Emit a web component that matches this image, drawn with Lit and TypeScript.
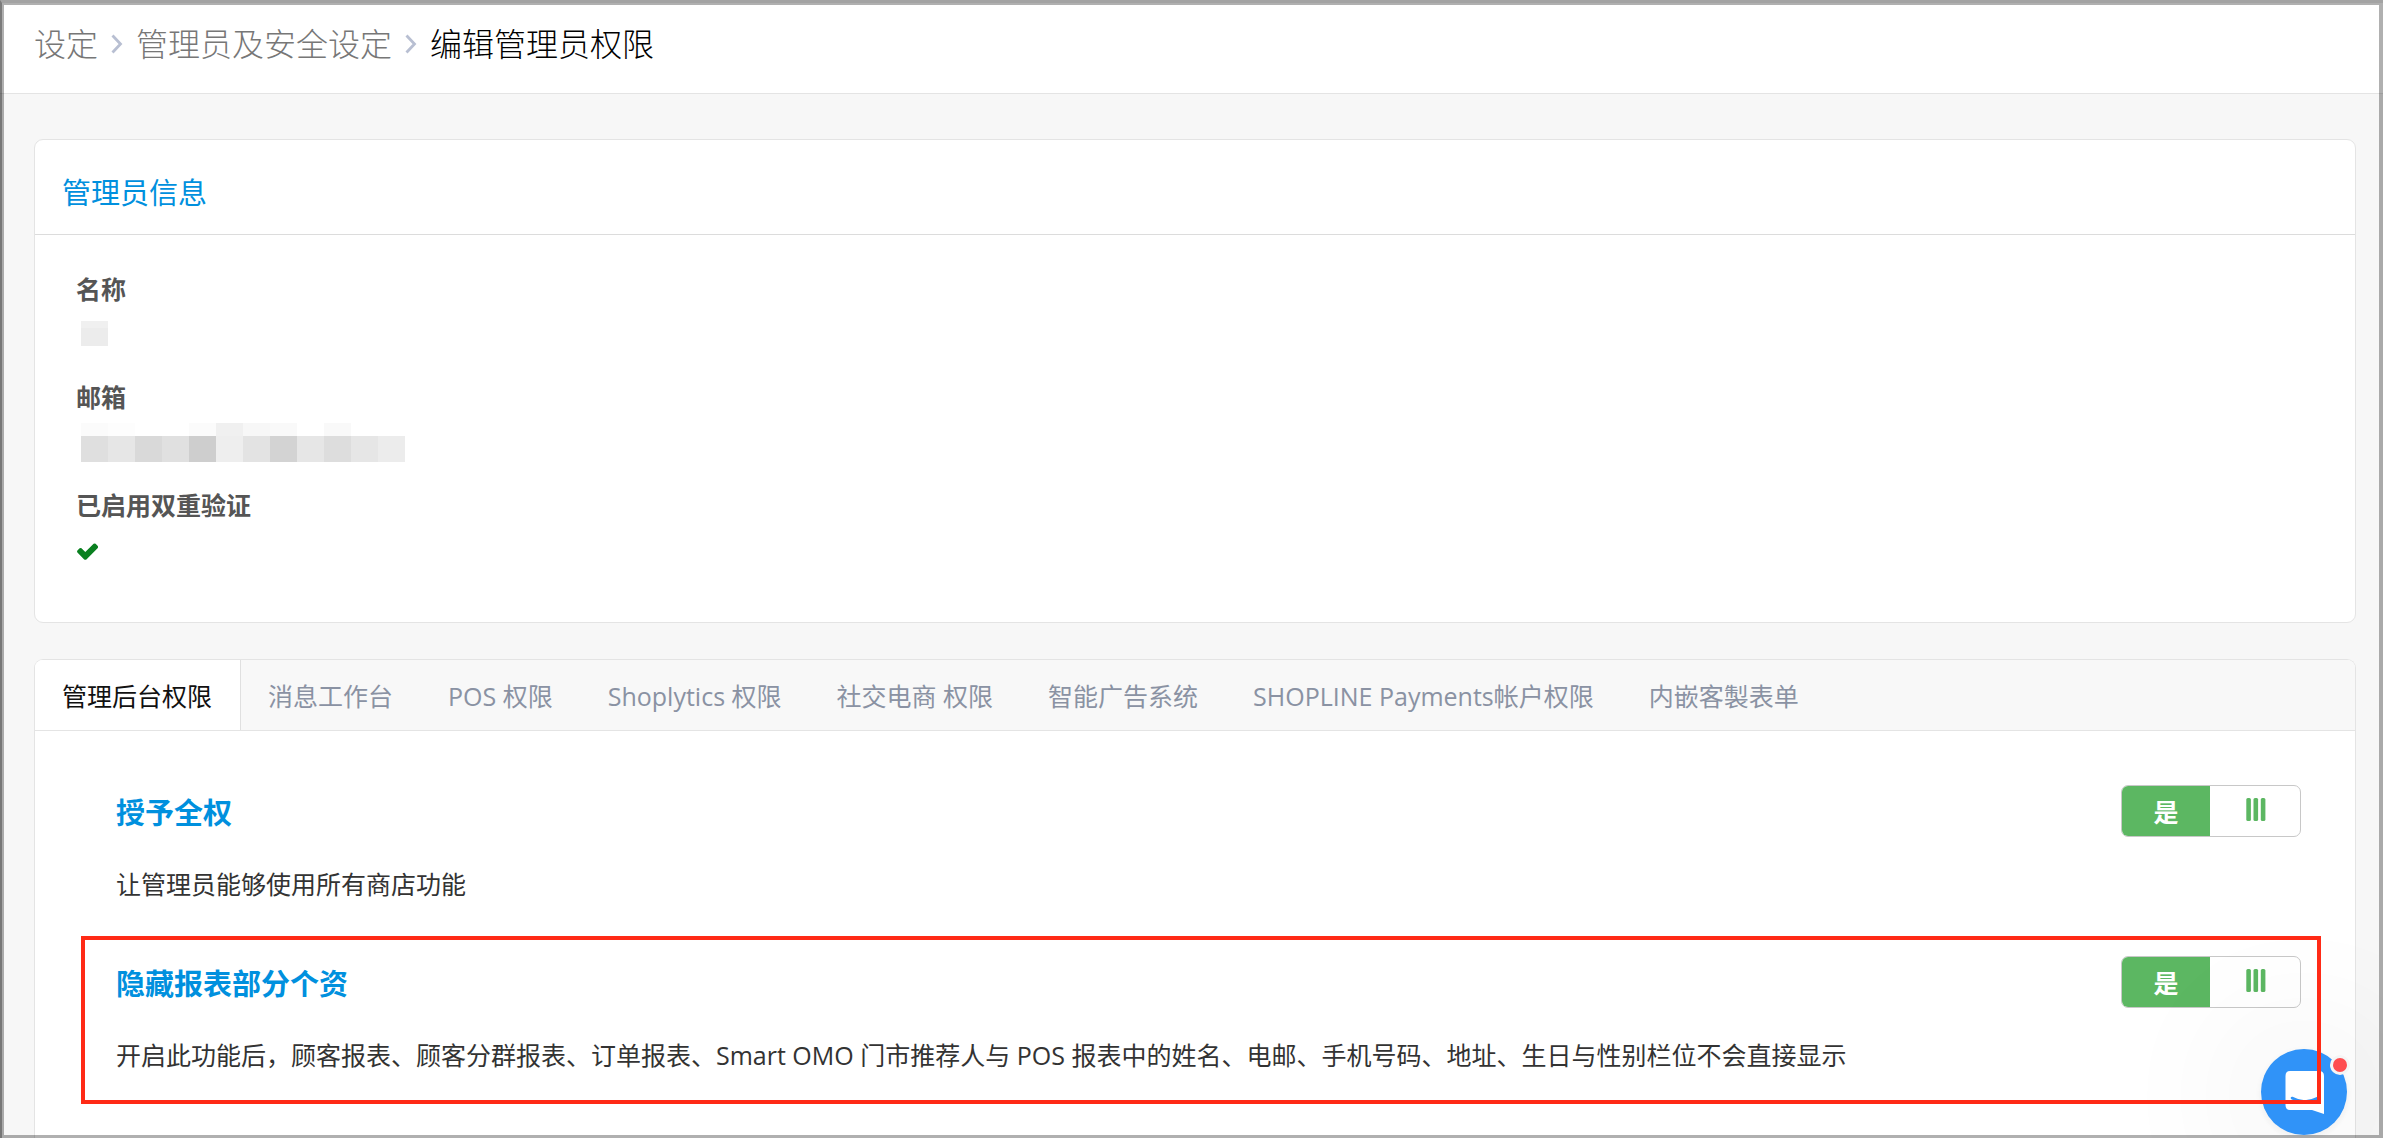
import { LitElement, html, css, svg, nothing } from "lit";
import { customElement, property, state } from "lit/decorators.js";
import { classMap } from "lit/directives/class-map.js";

interface Permission {
  title: string;
  text: string;
  on: boolean;
  marked: boolean;
}

type Block = [x: number, y: number, w: number, h: number, fill: string];

const NAME_BLOCKS: Block[] = [
  [0, 13, 27, 7, "#f0f0f0"],
  [0, 20, 27, 18, "#ececec"],
];

const MAIL_TOP = ["#fbfbfb", "#fdfdfd", "", "", "#fbfbfb", "#f0f0f0", "#f7f7f7", "#f9f9f9", "", "#f9f9f9", "", ""];
const MAIL_MAIN = [
  "#dfdfdf", "#e6e6e6", "#d9d9d9", "#e0e0e0", "#cecece", "#eeeeee",
  "#e3e3e3", "#d3d3d3", "#e6e6e6", "#dddddd", "#e6e6e6", "#ececec",
];
const MAIL_BLOCKS: Block[] = [
  ...MAIL_TOP.map((c, i): Block => [i * 27, 7, 27, 13, c || "#ffffff"]),
  ...MAIL_MAIN.map((c, i): Block => [i * 27, 20, 27, 26, c]),
];

@customElement("permission-switch")
export class PermissionSwitch extends LitElement {
  @property({ type: Boolean }) on = false;
  @property() label = "";

  static styles = css`
    :host {
      display: block;
    }
    .switch {
      display: grid;
      grid-template-columns: 88px 1fr;
      box-sizing: border-box;
      width: 180px;
      height: 52px;
      padding: 0;
      border: 1px solid #c8c8c8;
      border-radius: 7px;
      background: transparent;
      overflow: hidden;
      font: inherit;
      font-weight: 700;
      line-height: 52px;
      color: #fff;
      cursor: pointer;
    }
    .side {
      background: #5cb762;
    }
    .side.off {
      background: #c4c4c4;
      order: 1;
    }
    .grip {
      display: flex;
      justify-content: center;
      padding: 12px 0 0 2px;
    }
  `;

  private toggle() {
    this.on = !this.on;
  }

  render() {
    return html`
      <button class="switch" type="button" role="switch" aria-checked=${this.on ? "true" : "false"} aria-label=${this.label} @click=${this.toggle}>
        <span class=${classMap({ side: true, off: !this.on })}>${this.on ? "是" : "否"}</span>
        <span class="grip">
          <svg width="20" height="23" viewBox="0 0 20 23" fill="#5cb762" aria-hidden="true">
            <rect x="0.3" width="4.6" height="23" rx="1.5" />
            <rect x="7.5" width="4.6" height="23" rx="1.5" />
            <rect x="14.8" width="4.6" height="23" rx="1.5" />
          </svg>
        </span>
      </button>
    `;
  }
}

@customElement("app-root")
export class AppRoot extends LitElement {
  @state() private active = 0;

  private tabs = [
    "管理后台权限",
    "消息工作台",
    "POS 权限",
    "Shoplytics 权限",
    "社交电商 权限",
    "智能广告系统",
    "SHOPLINE Payments帐户权限",
    "内嵌客製表单",
  ];

  private permissions: Permission[] = [
    { title: "授予全权", text: "让管理员能够使用所有商店功能", on: true, marked: false },
    {
      title: "隐藏报表部分个资",
      text: "开启此功能后，顾客报表、顾客分群报表、订单报表、Smart OMO 门市推荐人与 POS 报表中的姓名、电邮、手机号码、地址、生日与性别栏位不会直接显示",
      on: true,
      marked: true,
    },
  ];

  static styles = css`
    :host {
      display: flex;
      flex-direction: column;
      min-height: 100vh;
      background: #f7f7f7;
      color: #333;
      font-family: "Open Sans", "Noto Sans CJK SC", sans-serif;
      font-size: 25px;
      line-height: 36px;
    }
    h2,
    h3,
    p,
    dl,
    dd {
      margin: 0;
    }
    .crumbs {
      display: flex;
      align-items: center;
      gap: 13px;
      padding: 20px 34px 25px;
      border-bottom: 1px solid #e4e4e4;
      background: #fff;
      font-size: 32px;
      font-weight: 300;
      line-height: 48px;
      color: #000;
    }
    .crumbs a {
      color: #777;
      text-decoration: none;
    }
    .crumbs svg {
      flex: none;
    }
    .page {
      flex: 1;
      display: flex;
      flex-direction: column;
      gap: 36px;
      padding: 45px 27px 0 34px;
    }
    .card {
      border: 1px solid #e4e4e4;
      border-radius: 9px;
      background: #fff;
      overflow: hidden;
    }
    .card-title {
      padding: 33px 27px 21px;
      border-bottom: 1px solid #dcdcdc;
      font-size: 29px;
      font-weight: 400;
      line-height: 40px;
      color: #0090de;
    }
    .fields {
      padding: 36px 41px 27px;
    }
    .field {
      height: 108px;
    }
    .field dt {
      font-weight: 700;
      color: #555;
    }
    .field svg {
      display: block;
    }
    .blocks {
      margin: 1px 0 0 5px;
    }
    .tick {
      margin-top: 20px;
    }
    .access {
      flex: 1;
      border-bottom: 0;
      border-bottom-left-radius: 0;
      border-bottom-right-radius: 0;
    }
    .tabs {
      display: flex;
      border-bottom: 1px solid #e4e4e4;
      background: #f8f8f8;
    }
    .tab {
      padding: 18px 28px 16px 27px;
      border: 0;
      background: none;
      font: inherit;
      color: #8a92a3;
      cursor: pointer;
    }
    .tab.active {
      border-right: 1px solid #e0e0e0;
      background: #fff;
      color: #111;
    }
    .list {
      display: flex;
      flex-direction: column;
      gap: 34px;
      padding: 34px 54px 34px 81px;
    }
    .row {
      position: relative;
      display: grid;
      grid-template-columns: 1fr auto;
      column-gap: 24px;
      padding-top: 20px;
    }
    .row-title {
      padding: 8px 0 4px;
      font-size: 29px;
      font-weight: 700;
      line-height: 40px;
      color: #0090de;
    }
    .row-text {
      grid-column: 1 / -1;
      padding: 29px 0 0;
    }
    .mark {
      position: absolute;
      inset: 0 -20px -31px -35px;
      z-index: 3;
      border: 4px solid #ff2a16;
      pointer-events: none;
    }
    .chat {
      position: fixed;
      right: 36px;
      bottom: 3px;
      z-index: 2;
      width: 86px;
      height: 86px;
      padding: 0;
      border: 0;
      border-radius: 50%;
      background: #3093f8;
      box-shadow: 0 2px 10px rgba(0, 0, 0, 0.06), 0 4px 160px rgba(0, 0, 0, 0.16);
      cursor: pointer;
    }
    .chat svg {
      display: block;
      overflow: visible;
    }
    .frame {
      position: fixed;
      inset: 0;
      z-index: 4;
      border: solid rgba(0, 0, 0, 0.31);
      border-width: 5px 4px 3px 4px;
      pointer-events: none;
    }
    .edge {
      position: fixed;
      inset: 0;
      z-index: 4;
      border-left: 2px solid rgba(0, 0, 0, 0.3);
      border-top: 3px solid rgba(0, 0, 0, 0.08);
      pointer-events: none;
    }
  `;

  private chevron() {
    return html`<svg width="12" height="20" viewBox="0 0 12 20" fill="none" stroke="#b8bfd2" stroke-width="2.8" aria-hidden="true">
      <path d="M1.5 1.5 L9.5 10 L1.5 18.5" />
    </svg>`;
  }

  private blocks(list: Block[], label: string) {
    return html`<svg class="blocks" width="324" height="46" viewBox="0 0 324 46" shape-rendering="crispEdges" role="img" aria-label=${label}>
      ${list.map(([x, y, w, h, fill]) => svg`<rect x=${x} y=${y} width=${w} height=${h} fill=${fill} />`)}
    </svg>`;
  }

  render() {
    return html`
      <nav class="crumbs">
        <a href="#settings">设定</a>
        ${this.chevron()}
        <a href="#staff">管理员及安全设定</a>
        ${this.chevron()}
        <span aria-current="page">编辑管理员权限</span>
      </nav>

      <main class="page">
        <section class="card">
          <h2 class="card-title">管理员信息</h2>
          <dl class="fields">
            <div class="field">
              <dt>名称</dt>
              <dd>${this.blocks(NAME_BLOCKS, "名称")}</dd>
            </div>
            <div class="field">
              <dt>邮箱</dt>
              <dd>${this.blocks(MAIL_BLOCKS, "邮箱")}</dd>
            </div>
            <div class="field">
              <dt>已启用双重验证</dt>
              <dd>
                <svg class="tick" width="24" height="18" viewBox="0 0 24 18" fill="#0a8020" role="img" aria-label="是">
                  <path d="M1.400 7.400 L3.600 5.200 Q4.600 4.600 5.500 5.300 L9.300 9 L17.600 0.800 Q18.600 0 19.600 0.800 L21.800 3 Q22.500 4 21.800 5 L10.400 16.400 Q9.300 17.200 8.200 16.400 L1.400 9.400 Q0.600 8.400 1.400 7.400 Z" />
                </svg>
              </dd>
            </div>
          </dl>
        </section>

        <section class="card access">
          <div class="tabs" role="tablist">
            ${this.tabs.map(
              (name, i) => html`<button
                class=${classMap({ tab: true, active: i === this.active })}
                type="button"
                role="tab"
                aria-selected=${i === this.active ? "true" : "false"}
                @click=${() => (this.active = i)}
              >${name}</button>`,
            )}
          </div>
          <div class="list">
            ${this.permissions.map(
              (p) => html`<div class="row">
                <h3 class="row-title">${p.title}</h3>
                <permission-switch ?on=${p.on} label=${p.title}></permission-switch>
                <p class="row-text">${p.text}</p>
                ${p.marked ? html`<div class="mark"></div>` : nothing}
              </div>`,
            )}
          </div>
        </section>
      </main>

      <button class="chat" type="button" aria-label="Chat">
        <svg width="86" height="86" viewBox="0 0 86 86" aria-hidden="true">
          <path d="M29 22 H58 Q63 22 63 27 V65 L51 61 H29 Q24.500 61 24.500 56 V27 Q24.500 22 29 22 Z" fill="#fff" />
          <path d="M31 49 Q43.500 56 57 49" fill="none" stroke="#3093f8" stroke-width="2.600" stroke-linecap="round" />
          <circle cx="79" cy="16" r="10" fill="#f5f5f5" />
          <circle cx="79" cy="16" r="7" fill="#ff4d50" />
        </svg>
      </button>
      <div class="frame"></div>
      <div class="edge"></div>
    `;
  }
}
